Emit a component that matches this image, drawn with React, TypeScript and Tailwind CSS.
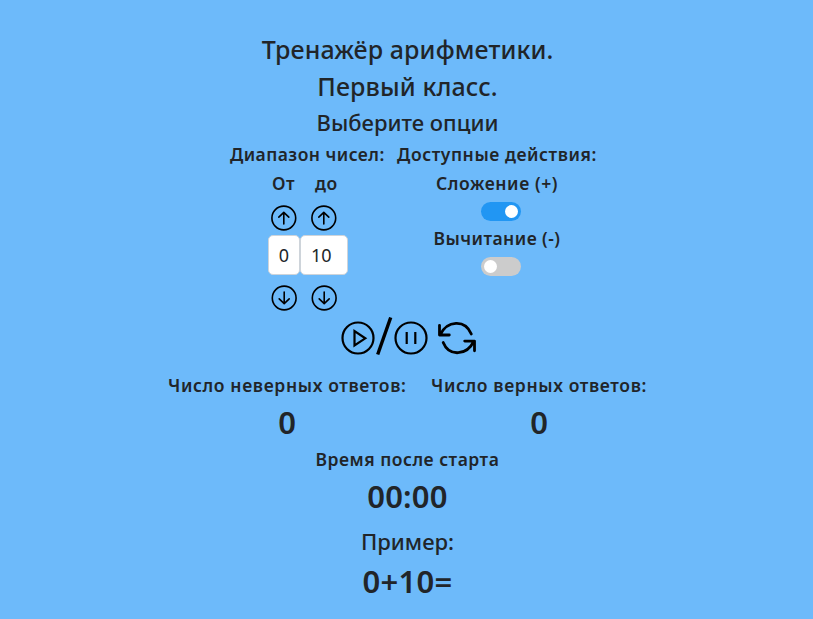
import type { ReactNode } from "react";

function Arrow({ down = false }: { down?: boolean }) {
  return (
    <svg className={down ? "block size-[26px] rotate-180" : "block size-[26px]"} viewBox="0 0 26 26" fill="none" stroke="#000" strokeWidth="1.6" strokeLinecap="round" strokeLinejoin="round">
      <circle cx="12.8" cy="13" r="11.9" />
      <path d="M12.8 19V7.5M7.8 12.2l5-4.8 5 4.8" />
    </svg>
  );
}

function Line({ className, children }: { className: string; children: ReactNode }) {
  return <div className={`whitespace-nowrap text-center ${className}`}>{children}</div>;
}

function Toggle({ on }: { on: boolean }) {
  return (
    <div className={on ? "flex h-[19px] w-10 items-center justify-end rounded-full bg-[#2196f3] px-[3px]" : "flex h-[19px] w-10 items-center rounded-full bg-[#ccc] px-[3px]"}>
      <div className="size-[13px] rounded-full bg-white" />
    </div>
  );
}

export default function App() {
  return (
    <main className="flex h-[619px] w-[813px] flex-col items-center overflow-hidden bg-[#6dbafa] pt-[31px] font-['Noto_Sans',sans-serif] font-semibold text-[#212529]">
      <Line className="h-[37px] pl-0.5 text-[25px] font-medium leading-[37px] tracking-[0.1px]">Тренажёр арифметики.</Line>
      <Line className="h-[37px] pl-0.5 text-[25px] font-medium leading-[37px] tracking-[0.1px]">Первый класс.</Line>
      <Line className="h-[35px] pl-0.5 text-[22px] font-medium leading-[34px]">Выберите опции</Line>
      <section className="flex h-[174px] w-full pl-[230px]">
        <div className="w-[167px]">
          <Line className="h-[29px] w-[154px] text-[17.5px] leading-[29px] tracking-[0.45px]">Диапазон чисел:</Line>
          <div className="flex h-[29px] pl-[42px] text-[17.5px] leading-[29px] tracking-[0.5px]">
            <span className="w-[43px]">От</span>
            <span>до</span>
          </div>
          <div className="flex gap-[14px] pl-[41px] pt-[7px]">
            <Arrow />
            <Arrow />
          </div>
          <div className="mt-1 flex pl-[38px] text-[18px] font-normal">
            <div className="flex h-10 w-8 items-center justify-center rounded-[5px] border border-[#ced4da] bg-white">0</div>
            <div className="flex h-10 w-12 items-center rounded-[5px] border border-[#ced4da] bg-white pl-[10px]">10</div>
          </div>
          <div className="flex gap-[14px] pl-[41px] pt-[10px]">
            <Arrow down />
            <Arrow down />
          </div>
        </div>
        <div className="flex w-[200px] flex-col items-center">
          <Line className="h-[29px] text-[17.5px] leading-[29px] tracking-[0.57px]">Доступные действия:</Line>
          <Line className="h-[33px] text-[17.5px] leading-[29px] tracking-[0.6px]">Сложение (+)</Line>
          <div className="h-[22px] pl-2"><Toggle on /></div>
          <Line className="h-[33px] text-[17.5px] leading-[29px] tracking-[0.45px]">Вычитание (-)</Line>
          <div className="pl-2"><Toggle on={false} /></div>
        </div>
      </section>
      <section className="flex h-[57px] w-full pl-[341px] pt-[3px]">
        <svg className="block h-10 w-[136px]" viewBox="341 317 136 40" fill="none" stroke="#000" strokeWidth="2.2" strokeLinecap="round" strokeLinejoin="round">
          <circle cx="358" cy="338" r="15.5" />
          <path d="M354.5 331v14.5l10.8-7.2z" strokeLinejoin="miter" />
          <path d="M377.7 354.5L390.7 317.5" strokeWidth="3.4" strokeLinecap="butt" />
          <circle cx="411" cy="338" r="15.5" />
          <path d="M406.7 332v12M415.3 332v12" strokeLinecap="butt" />
          <path d="M439.5 325.3v9.7h9.8M440.3 334.7C447 320.5 465 319 471.3 334M474.5 350.8v-9.7h-9.8M473.7 341.4C467 355.6 449 357 443.2 342.5" strokeWidth="2.8" />
        </svg>
      </section>
      <section className="flex h-[74px] w-full gap-[25px] pl-[168px]">
        <div className="w-[238px]">
          <Line className="h-[29px] text-[17.5px] leading-[29px] tracking-[0.63px]">Число неверных ответов:</Line>
          <Line className="h-[45px] text-[31px] leading-[45px]">0</Line>
        </div>
        <div className="w-[216px]">
          <Line className="h-[29px] text-[17.5px] leading-[29px] tracking-[0.63px]">Число верных ответов:</Line>
          <Line className="h-[45px] text-[31px] leading-[45px]">0</Line>
        </div>
      </section>
      <Line className="h-[29px] pl-0.5 text-[17.5px] leading-[29px] tracking-[0.5px]">Время после старта</Line>
      <Line className="h-[45px] pl-0.5 text-[31px] leading-[45px] tracking-[0.2px]">00:00</Line>
      <Line className="mt-[5px] h-[35px] pl-0.5 text-[22px] font-medium leading-[34px]">Пример:</Line>
      <Line className="h-[45px] pl-0.5 text-[31px] leading-[45px] tracking-[0.3px]">0+10=</Line>
    </main>
  );
}
